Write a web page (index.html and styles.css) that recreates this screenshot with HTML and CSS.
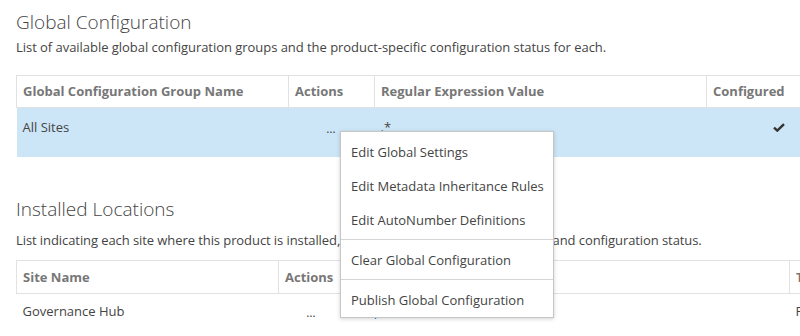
FILE: index.html
```html
<!DOCTYPE html>
<html lang="en">
  <head>
    <meta charset="UTF-8" />
    <meta name="viewport" content="width=device-width, initial-scale=1.0" />
    <title>Product Configuration</title>
    <link rel="stylesheet" href="styles.css">
  </head>
  <body>
    <main class="page">
      <section class="section">
        <h2 class="section-title">Global Configuration</h2>
        <p class="section-desc">List of available global configuration groups and the product-specific configuration status for each.</p>
        <table class="grid grid-global">
          <colgroup>
            <col class="col-name" />
            <col class="col-actions" />
            <col class="col-regex" />
            <col class="col-configured" />
          </colgroup>
          <thead>
            <tr>
              <th>Global Configuration Group Name</th>
              <th>Actions</th>
              <th>Regular Expression Value</th>
              <th>Configured</th>
            </tr>
          </thead>
          <tbody>
            <tr class="selected">
              <td>All Sites</td>
              <td class="actions">&hellip;</td>
              <td>.*</td>
              <td class="check">
                <svg width="12" height="9" viewBox="0 0 12 9">
                  <path d="M1 4.6 L4.3 7.6 L11 1.2" fill="none" stroke="#333" stroke-width="2.4" />
                </svg>
              </td>
            </tr>
          </tbody>
        </table>
      </section>

      <section class="section section-locations">
        <h2 class="section-title">Installed Locations</h2>
        <p class="section-desc">List indicating each site where this product is installed, along with the site's URL, site type, and configuration status.</p>
        <table class="grid grid-locations">
          <colgroup>
            <col class="col-site" />
            <col class="col-site-actions" />
            <col class="col-url" />
            <col class="col-type" />
          </colgroup>
          <thead>
            <tr>
              <th>Site Name</th>
              <th>Actions</th>
              <th>Site URL</th>
              <th>Type</th>
            </tr>
          </thead>
          <tbody>
            <tr>
              <td>Governance Hub</td>
              <td class="actions">&hellip;</td>
              <td><a class="link" href="#">https://hub.contoso.com</a></td>
              <td>Primary</td>
            </tr>
          </tbody>
        </table>
      </section>

      <!-- контекстное меню для строки All Sites -->
      <ul class="menu">
        <li class="menu-group">
          <a class="menu-item" href="#">Edit Global Settings</a>
          <a class="menu-item" href="#">Edit Metadata Inheritance Rules</a>
          <a class="menu-item" href="#">Edit AutoNumber Definitions</a>
        </li>
        <li class="menu-group">
          <a class="menu-item" href="#">Clear Global Configuration</a>
        </li>
        <li class="menu-group">
          <a class="menu-item" href="#">Publish Global Configuration</a>
        </li>
      </ul>
    </main>
  </body>
</html>
```
FILE: styles.css
```css
body {
  margin: 0;
  font-family: "Open Sans", sans-serif;
  font-size: 13px;
  color: #444;
  background-color: #fff;
  overflow: hidden;
}

.page {
  position: relative;
  padding: 9px 0 0 16px;
  width: 1000px;
}

.section-title {
  margin: 0;
  font-size: 19px;
  font-weight: 300;
  line-height: 26px;
  color: #444;
}

.section-desc {
  margin: 3px 0 19px;
  line-height: 18px;
  letter-spacing: -0.04px;
}

.section-locations {
  margin-top: 39px;
}

.section-locations .section-desc {
  margin-top: 9px;
  margin-bottom: 11px;
  letter-spacing: -0.08px;
}

.grid {
  border-collapse: collapse;
  table-layout: fixed;
}

.grid-global {
  width: 850px;
}

.grid-locations {
  width: 900px;
}

.col-name {
  width: 272px;
}

.col-actions {
  width: 86px;
}

.col-regex {
  width: 332px;
}

.col-site {
  width: 262px;
}

.col-site-actions {
  width: 66px;
}

.col-url {
  width: 445px;
}

th {
  padding: 6px 6px;
  line-height: 19px;
  text-align: left;
  font-weight: bold;
  color: #777;
  border: 1px solid #e1e1e1;
  white-space: nowrap;
}

.grid-locations th {
  padding: 7px 6px 6px;
}

td {
  padding: 10px 6px 19px;
  line-height: 18px;
  white-space: nowrap;
  vertical-align: top;
}

.grid-locations td {
  padding: 8px 6px 10px;
}

.selected td {
  background-color: #cde6f7;
}

td.actions {
  text-align: center;
  letter-spacing: 1px;
  font-size: 12px;
  padding-top: 12px;
}

.grid-locations td.actions {
  padding-top: 10px;
}

td.check {
  padding: 15px 6px 0 66px;
}

.check svg {
  display: block;
}

.link {
  color: #0072c6;
  text-decoration: none;
  padding-left: 6px;
}

.menu {
  position: absolute;
  left: 340px;
  top: 131px;
  width: 212px;
  margin: 0;
  padding: 0;
  list-style: none;
  background-color: #fff;
  border: 1px solid #c6c6c6;
  box-shadow: 0 1px 4px rgba(0, 0, 0, 0.18);
}

.menu-group {
  padding: 3px 0 2px;
}

.menu-group:last-child {
  padding-bottom: 0;
}

.menu-group + .menu-group {
  border-top: 1px solid #d4d4d4;
}

.menu-item {
  display: block;
  padding: 8px 10px;
  line-height: 18px;
  color: #444;
  text-decoration: none;
  white-space: nowrap;
}
```
